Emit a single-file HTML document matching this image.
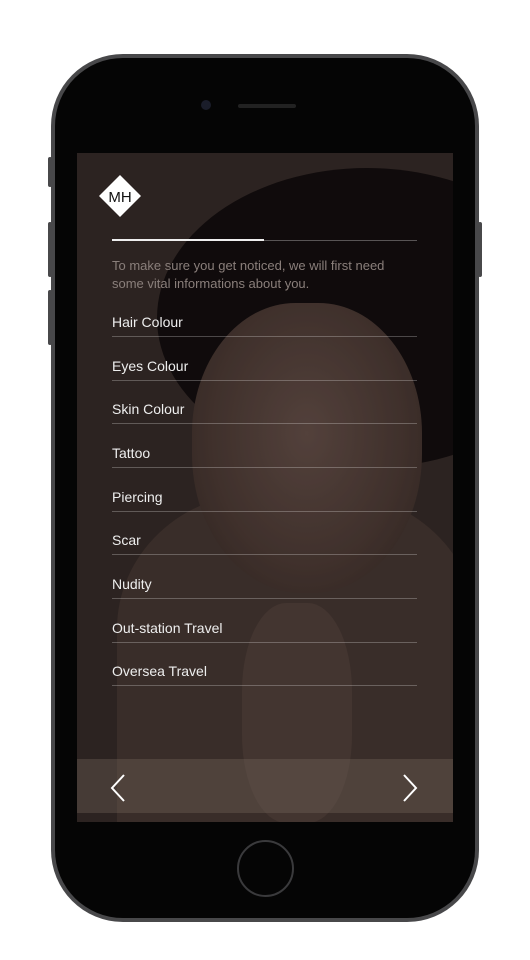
<!DOCTYPE html>
<html><head><style>
*{margin:0;padding:0;box-sizing:border-box}
body{width:530px;height:960px;background:#fff;position:relative;overflow:hidden;font-family:"Liberation Sans",sans-serif}
.phone{position:absolute;left:51px;top:54px;width:428px;height:868px;border-radius:72px;background:#48484a;}
.inner{position:absolute;left:55px;top:58px;width:420px;height:860px;border-radius:68px;background:#050505}
.btn{position:absolute;background:#48484a;width:4px;border-radius:2px}
.screen{position:absolute;left:77px;top:153px;width:376px;height:669px;overflow:hidden;background:#2e2522}
.hat{position:absolute;left:80px;top:15px;width:420px;height:300px;border-radius:50%;background:#0b0708}
.face{position:absolute;left:115px;top:150px;width:230px;height:290px;border-radius:45% 45% 48% 48%;background:radial-gradient(ellipse at 50% 45%,#5e4a43,#45352f 60%,#2e231f)}
.body{position:absolute;left:40px;top:340px;width:360px;height:340px;border-radius:40% 40% 0 0;background:#3e312c}
.hand{position:absolute;left:165px;top:450px;width:110px;height:220px;border-radius:40%;background:#4a3b35}
.text{position:absolute;left:35px;color:#fff}
.line{position:absolute;left:35px;width:305px;height:1px;background:rgba(255,255,255,.25)}
.item{position:absolute;left:35px;font-size:14px;color:#eee}
.nav{position:absolute;left:0;top:606px;width:376px;height:54px;background:rgba(120,105,95,.35)}
</style></head><body>
<div class="phone"></div><div class="inner"></div>
<div class="btn" style="left:48px;top:157px;height:30px"></div>
<div class="btn" style="left:48px;top:222px;height:55px"></div>
<div class="btn" style="left:48px;top:290px;height:55px"></div>
<div class="btn" style="left:478px;top:222px;height:55px"></div>
<div style="position:absolute;left:201px;top:100px;width:10px;height:10px;border-radius:50%;background:#1a1d2a"></div>
<div style="position:absolute;left:238px;top:104px;width:58px;height:4px;border-radius:2px;background:#222"></div>
<div style="position:absolute;left:237px;top:840px;width:57px;height:57px;border-radius:50%;border:2px solid #3a3a3c"></div>
<div class="screen">
<div class="body"></div><div class="hat"></div><div class="face"></div><div class="hand"></div>
<div style="position:absolute;left:0;top:0;width:376px;height:669px;background:rgba(40,30,28,.2)"></div>
<svg style="position:absolute;left:20px;top:20px" width="46" height="46" viewBox="0 0 46 46"><polygon points="23,2 44,23 23,44 2,23" fill="#fff"/><text x="23" y="29" text-anchor="middle" font-family="Liberation Sans" font-size="15" fill="#111">MH</text></svg>
<div style="position:absolute;left:35px;top:87px;width:305px;height:1px;background:rgba(255,255,255,.3)"></div>
<div style="position:absolute;left:35px;top:86px;width:152px;height:2px;background:#eee"></div>
<div class="text" style="top:104px;font-size:13px;line-height:18px;color:#8a7f7b">To make sure you get noticed, we will first need<br>some vital informations about you.</div>
<div class="item" style="top:161px">Hair Colour</div><div class="line" style="top:183px"></div>
<div class="item" style="top:205px">Eyes Colour</div><div class="line" style="top:227px"></div>
<div class="item" style="top:248px">Skin Colour</div><div class="line" style="top:270px"></div>
<div class="item" style="top:292px">Tattoo</div><div class="line" style="top:314px"></div>
<div class="item" style="top:336px">Piercing</div><div class="line" style="top:358px"></div>
<div class="item" style="top:379px">Scar</div><div class="line" style="top:401px"></div>
<div class="item" style="top:423px">Nudity</div><div class="line" style="top:445px"></div>
<div class="item" style="top:467px">Out-station Travel</div><div class="line" style="top:489px"></div>
<div class="item" style="top:510px">Oversea Travel</div><div class="line" style="top:532px"></div>
<div class="nav"></div>
<svg style="position:absolute;left:32px;top:620px" width="20" height="30"><path d="M15 2 L3 15 L15 28" stroke="#fff" stroke-width="2" fill="none"/></svg>
<svg style="position:absolute;left:323px;top:620px" width="20" height="30"><path d="M4 2 L16 15 L4 28" stroke="#fff" stroke-width="2" fill="none"/></svg>
</div>
</body></html>
